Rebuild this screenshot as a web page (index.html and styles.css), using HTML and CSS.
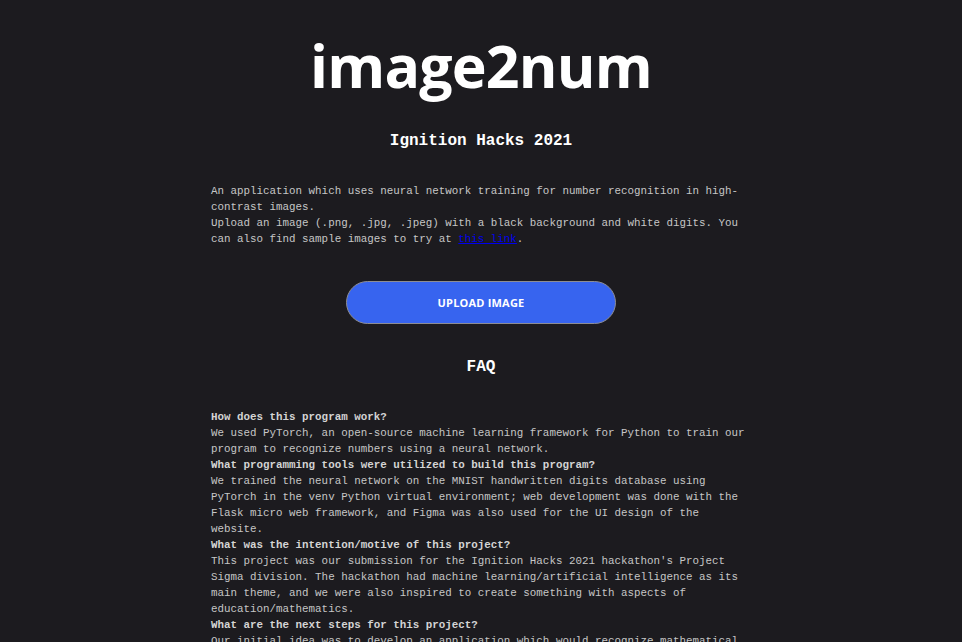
FILE: index.html
```html
<!DOCTYPE html>
<html lang="en">
<head>
<meta charset="utf-8">
<title>image2num</title>
<link rel="stylesheet" href="styles.css">
</head>
<body>
<main class="page">
  <h1 class="title">image2num</h1>
  <h2 class="subtitle">Ignition Hacks 2021</h2>
  <p class="intro">An application which uses neural network training for number recognition in high-contrast images.<br>Upload an image (.png, .jpg, .jpeg) with a black background and white digits. You can also find sample images to try at <a class="link" href="#">this link</a>.</p>
  <div class="actions">
    <button class="upload" type="button">UPLOAD IMAGE</button>
  </div>
  <h2 class="faq-title">FAQ</h2>
  <div class="faq">
    <p class="q">How does this program work?</p>
    <p class="a">We used PyTorch, an open-source machine learning framework for Python to train our program to recognize numbers using a neural network.</p>
    <p class="q">What programming tools were utilized to build this program?</p>
    <p class="a">We trained the neural network on the MNIST handwritten digits database using PyTorch in the venv Python virtual environment; web development was done with the Flask micro web framework, and Figma was also used for the UI design of the website.</p>
    <p class="q">What was the intention/motive of this project?</p>
    <p class="a">This project was our submission for the Ignition Hacks 2021 hackathon's Project Sigma division. The hackathon had machine learning/artificial intelligence as its main theme, and we were also inspired to create something with aspects of education/mathematics.</p>
    <p class="q">What are the next steps for this project?</p>
    <p class="a">Our initial idea was to develop an application which would recognize mathematical expressions from images and solve them, and we hope to expand the program to support more symbols in the future.</p>
  </div>
</main>
</body>
</html>
```
FILE: styles.css
```css
html, body {
  margin: 0;
  padding: 0;
  background: #1c1b1f;
}
body {
  font-family: "Liberation Mono", "DejaVu Sans Mono", monospace;
  color: #c6c6c6;
}
.page {
  width: 540px;
  margin: 0 auto;
  display: flex;
  flex-direction: column;
}
.title {
  margin: 36px 0 0;
  font-family: "Open Sans", "Liberation Sans", sans-serif;
  font-weight: 700;
  font-size: 59px;
  line-height: 59px;
  color: #ffffff;
  text-align: center;
  letter-spacing: -0.8px;
}
.subtitle {
  margin: 36px 0 0;
  font-size: 16px;
  line-height: 20px;
  font-weight: 700;
  color: #ffffff;
  text-align: center;
}
.intro {
  margin: 32px 0 0;
  font-size: 10.85px;
  line-height: 16px;
}
.link {
  color: #0000ee;
}
.actions {
  display: flex;
  justify-content: center;
  margin-top: 34px;
}
.upload {
  width: 270px;
  height: 43px;
  border: 1px solid #8d8d93;
  border-radius: 22px;
  background: #3764ef;
  color: #ffffff;
  font-family: "Open Sans", "Liberation Sans", sans-serif;
  font-weight: 700;
  font-size: 11px;
  letter-spacing: 0.2px;
  cursor: pointer;
}
.faq-title {
  margin: 33px 0 0;
  font-size: 16px;
  line-height: 20px;
  font-weight: 700;
  color: #ffffff;
  text-align: center;
}
.faq {
  margin-top: 32px;
  font-size: 10.85px;
  line-height: 16px;
}
.faq p {
  margin: 0;
}
.q {
  font-weight: 700;
  color: #d4d4d4;
}
```
